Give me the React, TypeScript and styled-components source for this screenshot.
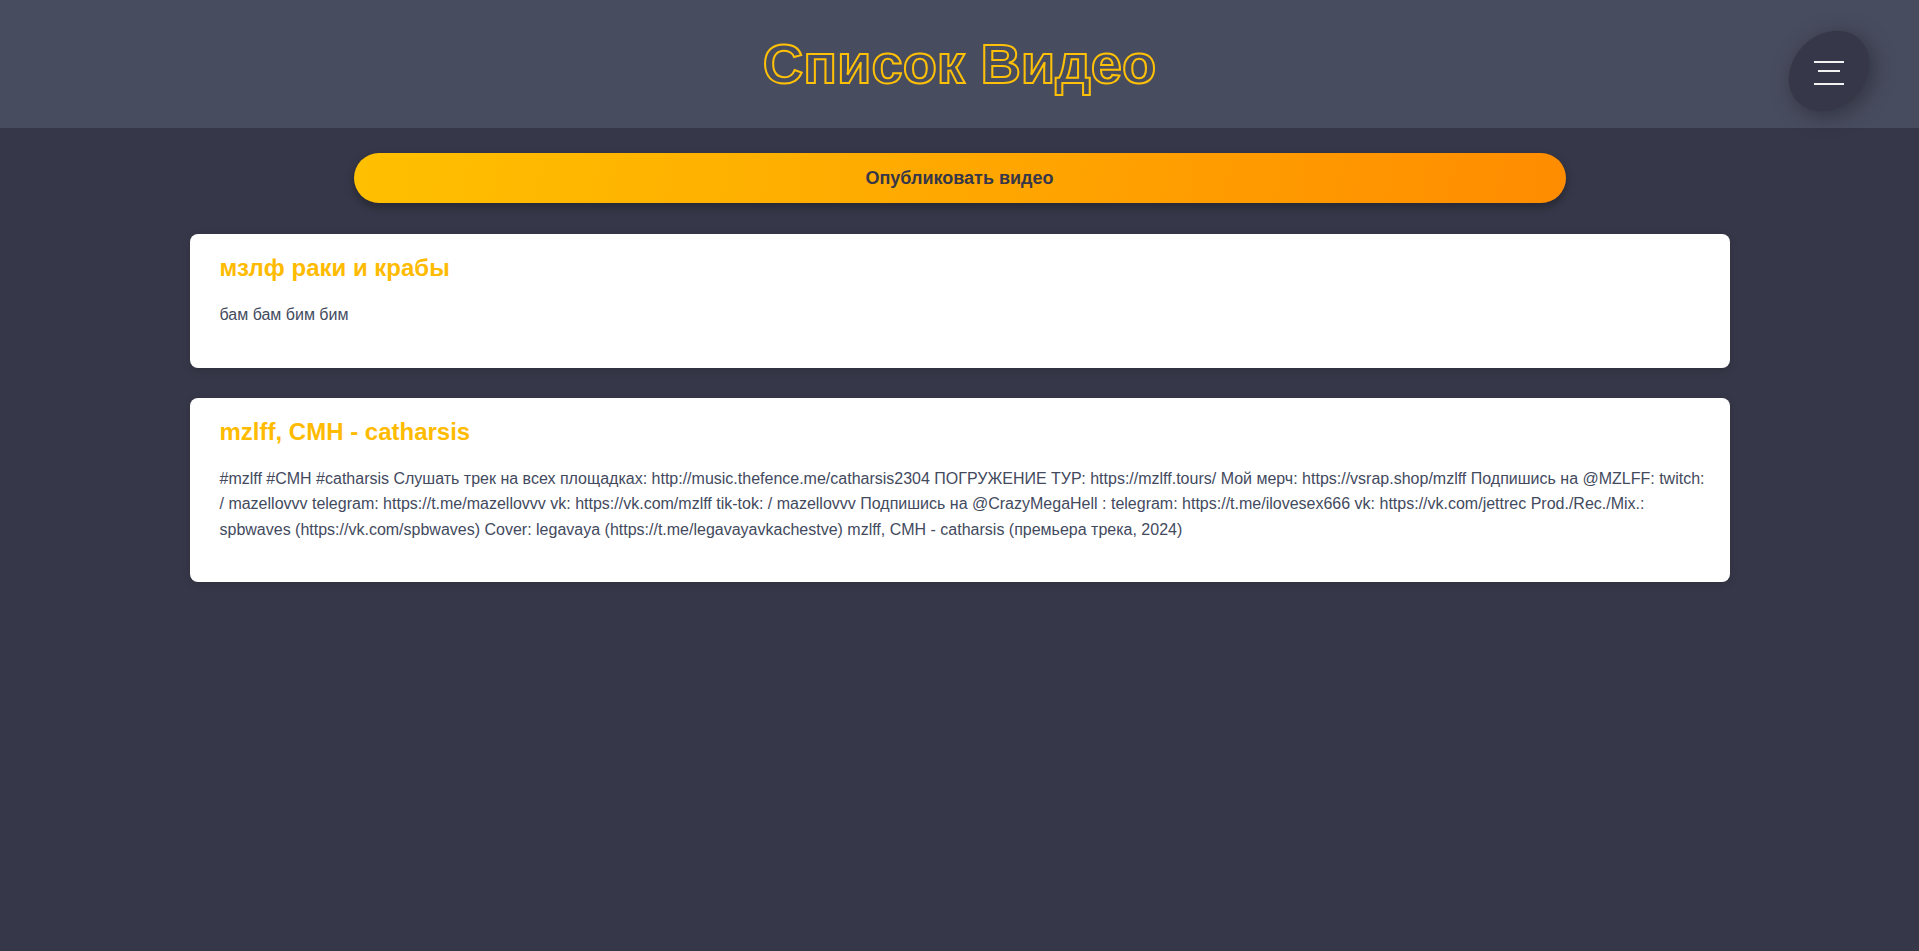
import React from "react";
import styled, { createGlobalStyle } from "styled-components";

const GlobalStyle = createGlobalStyle`
  html, body {
    margin: 0;
    padding: 0;
    background: #363748;
    font-family: "Liberation Sans", Arial, sans-serif;
    min-height: 100vh;
  }
  * { box-sizing: border-box; }
`;

const Header = styled.header`
  height: 128px;
  background: #484c5f;
  display: grid;
  grid-template-columns: 1fr auto 1fr;
  align-items: center;
`;

const Title = styled.h1`
  grid-column: 2;
  margin: 0;
  font-size: 56px;
  line-height: 64px;
  font-weight: 700;
  color: transparent;
  -webkit-text-stroke: 2px #ffc107;
  letter-spacing: 0;
`;

const MenuButton = styled.button`
  grid-column: 3;
  justify-self: end;
  align-self: start;
  margin: 31px 50px 0 0;
  position: relative;
  width: 80px;
  height: 80px;
  border: none;
  background: transparent;
  padding: 30px 0 0 0;
  display: flex;
  flex-direction: column;
  align-items: center;
  cursor: pointer;

  &::before {
    content: "";
    position: absolute;
    left: -4px;
    top: 4px;
    width: 88px;
    height: 72px;
    border-radius: 50%;
    background: #363748;
    transform: rotate(-45deg);
    box-shadow: 0 6px 22px rgba(0, 0, 0, 0.35);
  }
`;

const Bar = styled.span<{ $w: number; $mt: number }>`
  position: relative;
  display: block;
  width: ${(p) => p.$w}px;
  height: 2px;
  margin-top: ${(p) => p.$mt}px;
  background: #f2f2f2;
`;

const Main = styled.main`
  width: 1540px;
  margin: 0 auto;
  padding-top: 25px;
  display: flex;
  flex-direction: column;
  align-items: center;
`;

const PublishButton = styled.button`
  width: 1212px;
  height: 50px;
  border: none;
  border-radius: 25px;
  background: linear-gradient(100deg, #ffc000 0%, #ffa800 50%, #ff8c00 100%);
  box-shadow: 0 4px 10px rgba(0, 0, 0, 0.3);
  color: #363748;
  font-family: "Liberation Sans", Arial, sans-serif;
  font-size: 18px;
  font-weight: 700;
  cursor: pointer;
  margin-bottom: 31px;
`;

const CardList = styled.div`
  width: 100%;
  display: flex;
  flex-direction: column;
  gap: 30px;
`;

const Card = styled.article`
  background: #ffffff;
  border-radius: 8px;
  padding: 20px 24px 20px 30px;
  box-shadow: 0 2px 8px rgba(0, 0, 0, 0.15);
`;

const CardTitle = styled.h2`
  margin: 0 0 20px 0;
  font-size: 24px;
  font-weight: 700;
  color: #ffbb00;
`;

const CardText = styled.p`
  margin: 0 0 20px 0;
  font-size: 16px;
  line-height: 25.6px;
  color: #434a5e;
`;

const videos = [
  { title: "мзлф раки и крабы", text: "бам бам бим бим" },
  {
    title: "mzlff, CMH - catharsis",
    text:
      "#mzlff #CMH #catharsis Слушать трек на всех площадках: http://music.thefence.me/catharsis2304 ПОГРУЖЕНИЕ ТУР: https://mzlff.tours/ Мой мерч: https://vsrap.shop/mzlff Подпишись на @MZLFF: twitch: / mazellovvv telegram: https://t.me/mazellovvv vk: https://vk.com/mzlff tik-tok: / mazellovvv Подпишись на @CrazyMegaHell : telegram: https://t.me/ilovesex666 vk: https://vk.com/jettrec Prod./Rec./Mix.: spbwaves (https://vk.com/spbwaves) Cover: legavaya (https://t.me/legavayavkachestve) mzlff, CMH - catharsis (премьера трека, 2024)",
  },
];

export default function App() {
  return (
    <>
      <GlobalStyle />
      <Header>
        <Title>Список Видео</Title>
        <MenuButton aria-label="Меню">
          <Bar $w={30} $mt={0} />
          <Bar $w={22} $mt={7} />
          <Bar $w={30} $mt={11} />
        </MenuButton>
      </Header>
      <Main>
        <PublishButton>Опубликовать видео</PublishButton>
        <CardList>
          {videos.map((v) => (
            <Card key={v.title}>
              <CardTitle>{v.title}</CardTitle>
              <CardText>{v.text}</CardText>
            </Card>
          ))}
        </CardList>
      </Main>
    </>
  );
}
